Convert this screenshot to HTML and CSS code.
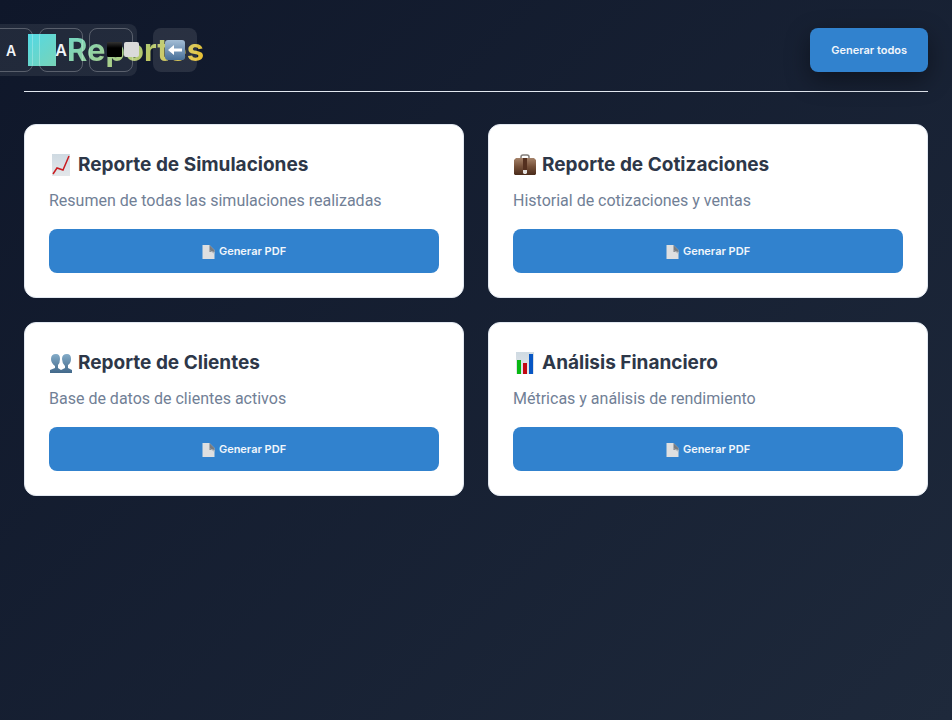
FILE: index.html
```html
<!DOCTYPE html>
<html lang="es">
<head>
<meta charset="utf-8">
<meta name="viewport" content="width=device-width, initial-scale=1">
<title>Reportes</title>
<link rel="stylesheet" href="styles.css">
</head>
<body>
<svg class="defs" aria-hidden="true">
  <defs>
    <linearGradient id="paper" x2="0" y2="1"><stop stop-color="#cfdae2"/><stop offset="1" stop-color="#e3e7ea"/></linearGradient>
    <linearGradient id="leather" x2="0" y2="1"><stop stop-color="#a58269"/><stop offset=".5" stop-color="#755039"/><stop offset="1" stop-color="#4a2b1b"/></linearGradient>
    <linearGradient id="people" x2="0" y2="1"><stop stop-color="#83abc8"/><stop offset="1" stop-color="#42698a"/></linearGradient>
    <linearGradient id="key" x2="0" y2="1"><stop stop-color="#a3bdd5"/><stop offset="1" stop-color="#48709a"/></linearGradient>
    <linearGradient id="dark" x2="0" y2="1"><stop stop-color="#333"/><stop offset=".4" stop-color="#000"/></linearGradient>
    <symbol id="page" viewBox="0 0 12 15"><path d="M0 1h7l5 5v9H0z" fill="#dedfe0"/><path d="M7 1l5 5v2H7z" fill="#777c81"/><path d="M6 6l6 2v2z" fill="#b4b7ba"/></symbol>
  </defs>
</svg>
<nav class="tools" aria-label="Accesibilidad">
  <div class="tool-group">
    <button class="tool tool-small" type="button">A</button>
    <button class="tool tool-large" type="button">A</button>
    <button class="tool" type="button" aria-label="Contraste">
      <svg class="contrast-icon" width="34" height="16" viewBox="0 0 34 16"><rect x="1" width="15" height="15" rx="1" fill="url(#dark)"/><rect x="18" width="15" height="15" rx="2" fill="#dadada"/></svg>
    </button>
  </div>
  <button class="back" type="button" aria-label="Volver">
    <svg width="20" height="20" viewBox="0 0 20 20"><rect width="20" height="20" rx="3" fill="url(#key)"/><path d="M3 10l6-5v3.500h8v3H9V15z" fill="#fff"/></svg>
  </button>
</nav>
<main class="page">
  <header class="header">
    <h1 class="title"><span class="title-mark"></span>Reportes</h1>
    <button class="button button-all" type="button">Generar todos</button>
  </header>
  <div class="cards">
    <section class="card">
      <h2 class="card-title"><svg class="card-icon" viewBox="0 0 24 24"><path d="M3 1h18v22H3z" fill="url(#paper)"/><path d="M4 21l4-6 6 2 6-14" fill="none" stroke="#c91c20" stroke-width="1.500"/></svg>Reporte de Simulaciones</h2>
      <p class="card-text">Resumen de todas las simulaciones realizadas</p>
      <button class="button" type="button"><svg class="page-icon"><use href="#page"/></svg>Generar PDF</button>
    </section>
    <section class="card">
      <h2 class="card-title"><svg class="card-icon" viewBox="0 0 24 24"><path d="M8 6V4q0-2 2-2h4q2 0 2 2v2" fill="none" stroke="#827d79" stroke-width="1.500"/><path d="M3 5h18l2 2v14l-1 1H2l-1-1V7z" fill="url(#leather)"/><path d="M10 5h4v12h-4z" fill="#54301f"/><path d="M10 17h4v3l-1 1h-2l-1-1z" fill="#e5e2df"/></svg>Reporte de Cotizaciones</h2>
      <p class="card-text">Historial de cotizaciones y ventas</p>
      <button class="button" type="button"><svg class="page-icon"><use href="#page"/></svg>Generar PDF</button>
    </section>
    <section class="card">
      <h2 class="card-title"><svg class="card-icon" viewBox="0 0 24 24"><g fill="url(#people)"><path d="M1 22v-3l5-2v-2Q2 12 2 8q0-5 5-5 4 0 4 5 0 4-2 6v3l3 2v3z"/><path d="M12 22v-3l4-2v-2q-3-3-3-7 0-5 5-5 4 0 4 5 0 4-3 6v3l4 2v3z"/></g></svg>Reporte de Clientes</h2>
      <p class="card-text">Base de datos de clientes activos</p>
      <button class="button" type="button"><svg class="page-icon"><use href="#page"/></svg>Generar PDF</button>
    </section>
    <section class="card">
      <h2 class="card-title"><svg class="card-icon" viewBox="0 0 24 24"><path d="M3 1h18v22H3z" fill="url(#paper)"/><path d="M4 9h4v14H4z" fill="#08b812"/><path d="M10 12h4v11h-4z" fill="#c20812"/><path d="M16 3h4v20h-4z" fill="#0756c4"/></svg>Análisis Financiero</h2>
      <p class="card-text">Métricas y análisis de rendimiento</p>
      <button class="button" type="button"><svg class="page-icon"><use href="#page"/></svg>Generar PDF</button>
    </section>
  </div>
</main>
</body>
</html>
```
FILE: styles.css
```css
* { box-sizing: border-box; }
body {
  margin: 0;
  min-height: 100vh;
  background: linear-gradient(135deg, #0f172a, #1e293b);
  font-family: Inter, "Liberation Sans", sans-serif;
  color: #2d3748;
}
button { font-family: inherit; cursor: pointer; }
.defs { position: absolute; width: 0; height: 0; }
.page { padding: 24px; }
.header {
  display: flex;
  align-items: center;
  justify-content: space-between;
  height: 68px;
  padding-bottom: 16px;
  margin-bottom: 32px;
  border-bottom: 1px solid #e2e8f0;
}
.title {
  display: flex;
  align-items: center;
  gap: 11px;
  margin: 0;
  padding-left: 4px;
  font-size: 31px;
  line-height: 52px;
  font-weight: 700;
  background: linear-gradient(135deg, #38d9f0, #fbbf24);
  background-clip: text;
  -webkit-background-clip: text;
  color: transparent;
}
.title-mark { width: 28px; height: 32px; background: linear-gradient(135deg, #45d6e3, #6dd0b2); }
.button {
  display: flex;
  align-items: center;
  justify-content: center;
  gap: 4px;
  width: 100%;
  height: 44px;
  padding: 0 21px;
  border: 0;
  border-radius: 8px;
  background: #3182ce;
  color: #f1f6fb;
  font-size: 11px;
  font-weight: 600;
}
.button-all { width: auto; box-shadow: 0 8px 24px rgba(0, 0, 0, 0.4); }
.page-icon { width: 13px; height: 15px; }
.cards {
  display: grid;
  grid-template-columns: repeat(2, minmax(0, 1fr));
  gap: 24px;
}
.card {
  padding: 24px;
  border: 1px solid #e2e8f0;
  border-radius: 12px;
  background: #fff;
}
.card-title {
  display: flex;
  align-items: center;
  gap: 5px;
  margin: 0 0 8px;
  font-size: 19px;
  line-height: 32px;
  font-weight: 700;
}
.card-icon { width: 24px; height: 24px; }
.card-text {
  margin: 0 0 16px;
  color: #718096;
  font-family: Roboto, "Liberation Sans", sans-serif;
  font-size: 16px;
  line-height: 24px;
}
.tools {
  position: absolute;
  top: 24px;
  left: -15px;
  display: flex;
  align-items: center;
  gap: 16px;
}
.tool-group {
  display: flex;
  gap: 6px;
  padding: 4px;
  border-radius: 8px;
  background: rgba(255, 255, 255, 0.08);
}
.tool, .back {
  display: flex;
  align-items: center;
  justify-content: center;
  width: 44px;
  height: 44px;
  padding: 0;
  border-radius: 8px;
  background: transparent;
  color: #f1f5f9;
  font-weight: 600;
}
.tool { border: 1px solid rgba(255, 255, 255, 0.25); }
.tool-small { font-size: 14px; }
.tool-large { font-size: 16px; }
.contrast-icon { flex: none; margin-left: 24px; }
.back { border: 0; background: rgba(255, 255, 255, 0.1); }
```
